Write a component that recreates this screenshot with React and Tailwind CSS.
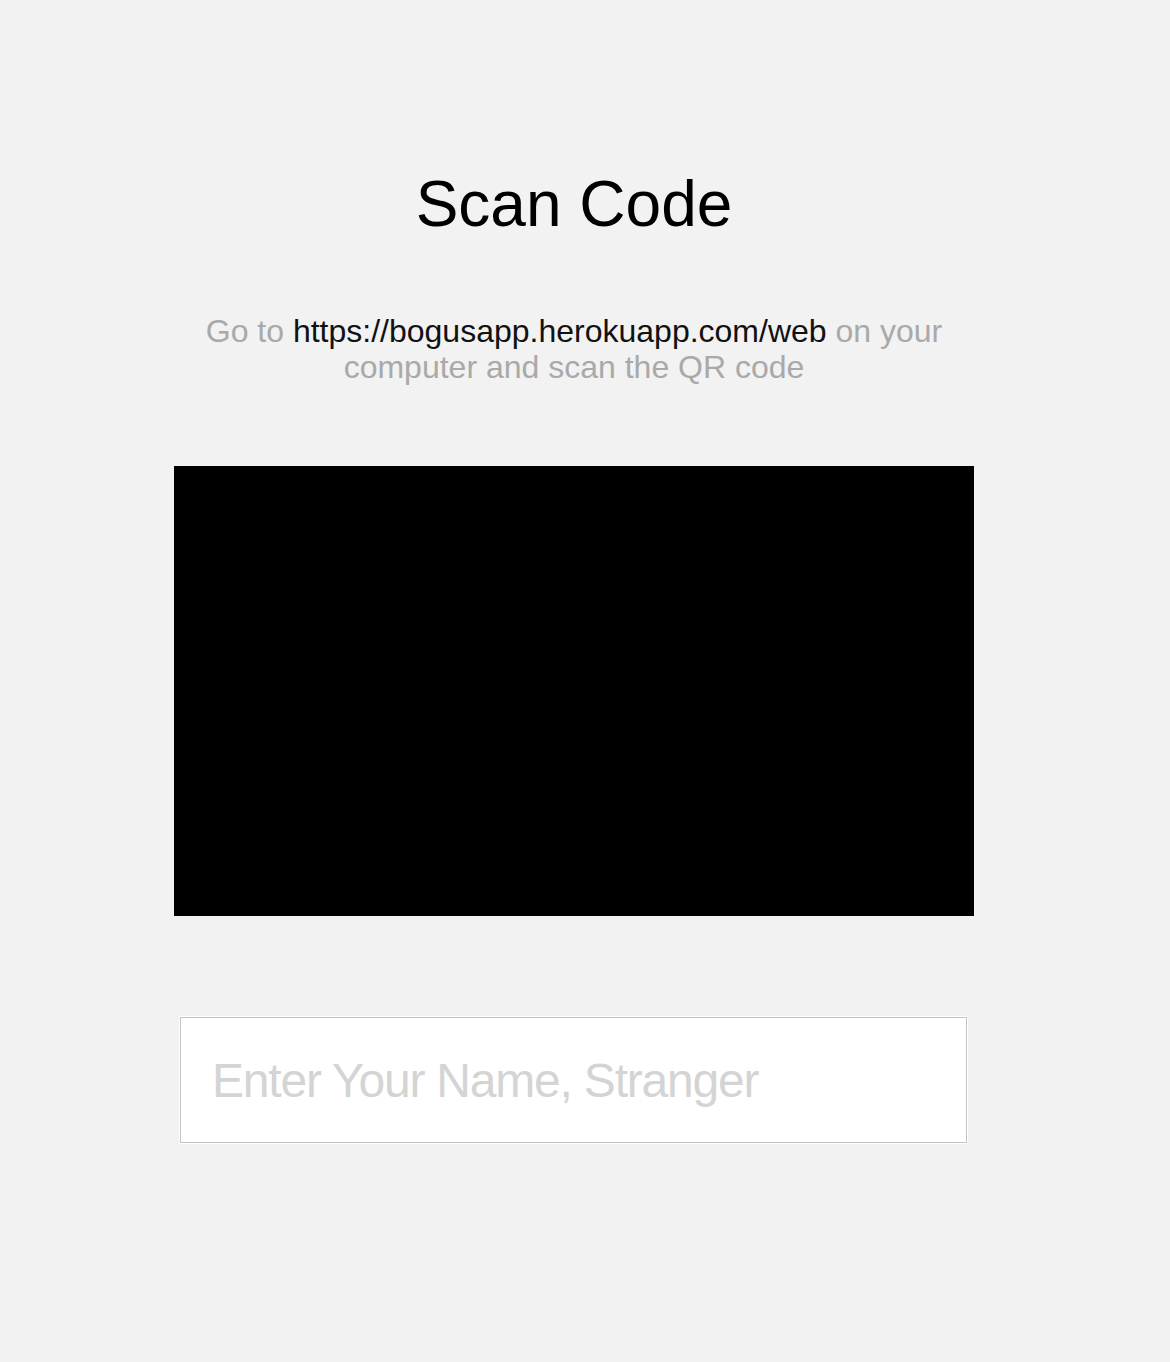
export default function App() {
  return (
    <div
      className="min-h-screen w-full bg-[#f2f2f2]"
      style={{ fontFamily: '"Liberation Sans", Arial, sans-serif' }}
    >
      <div className="w-[1148px] flex flex-col items-center pt-[172px] pb-[220px]">
        <h1 className="text-[64px] leading-none font-normal text-black">Scan Code</h1>
        <p className="mt-[77px] w-[800px] text-center text-[32px] leading-[36px] text-[#a9a9a9]">
          Go to <span className="text-[#111111]">https://bogusapp.herokuapp.com/web</span> on your computer and scan the QR code
        </p>
        <div className="mt-[81px] w-[800px] h-[450px] bg-black" />
        <input
          type="text"
          placeholder="Enter Your Name, Stranger"
          className="mt-[101px] ml-[-1px] w-[787px] h-[126px] bg-white border border-[#c3c3c3] shadow-[0_0_0_1px_#ffffff] pl-[31px] text-[48px] tracking-[-1.2px] text-black placeholder:text-[#d4d4d4] outline-none"
          style={{ fontFamily: '"Liberation Sans", Arial, sans-serif' }}
        />
      </div>
    </div>
  );
}
